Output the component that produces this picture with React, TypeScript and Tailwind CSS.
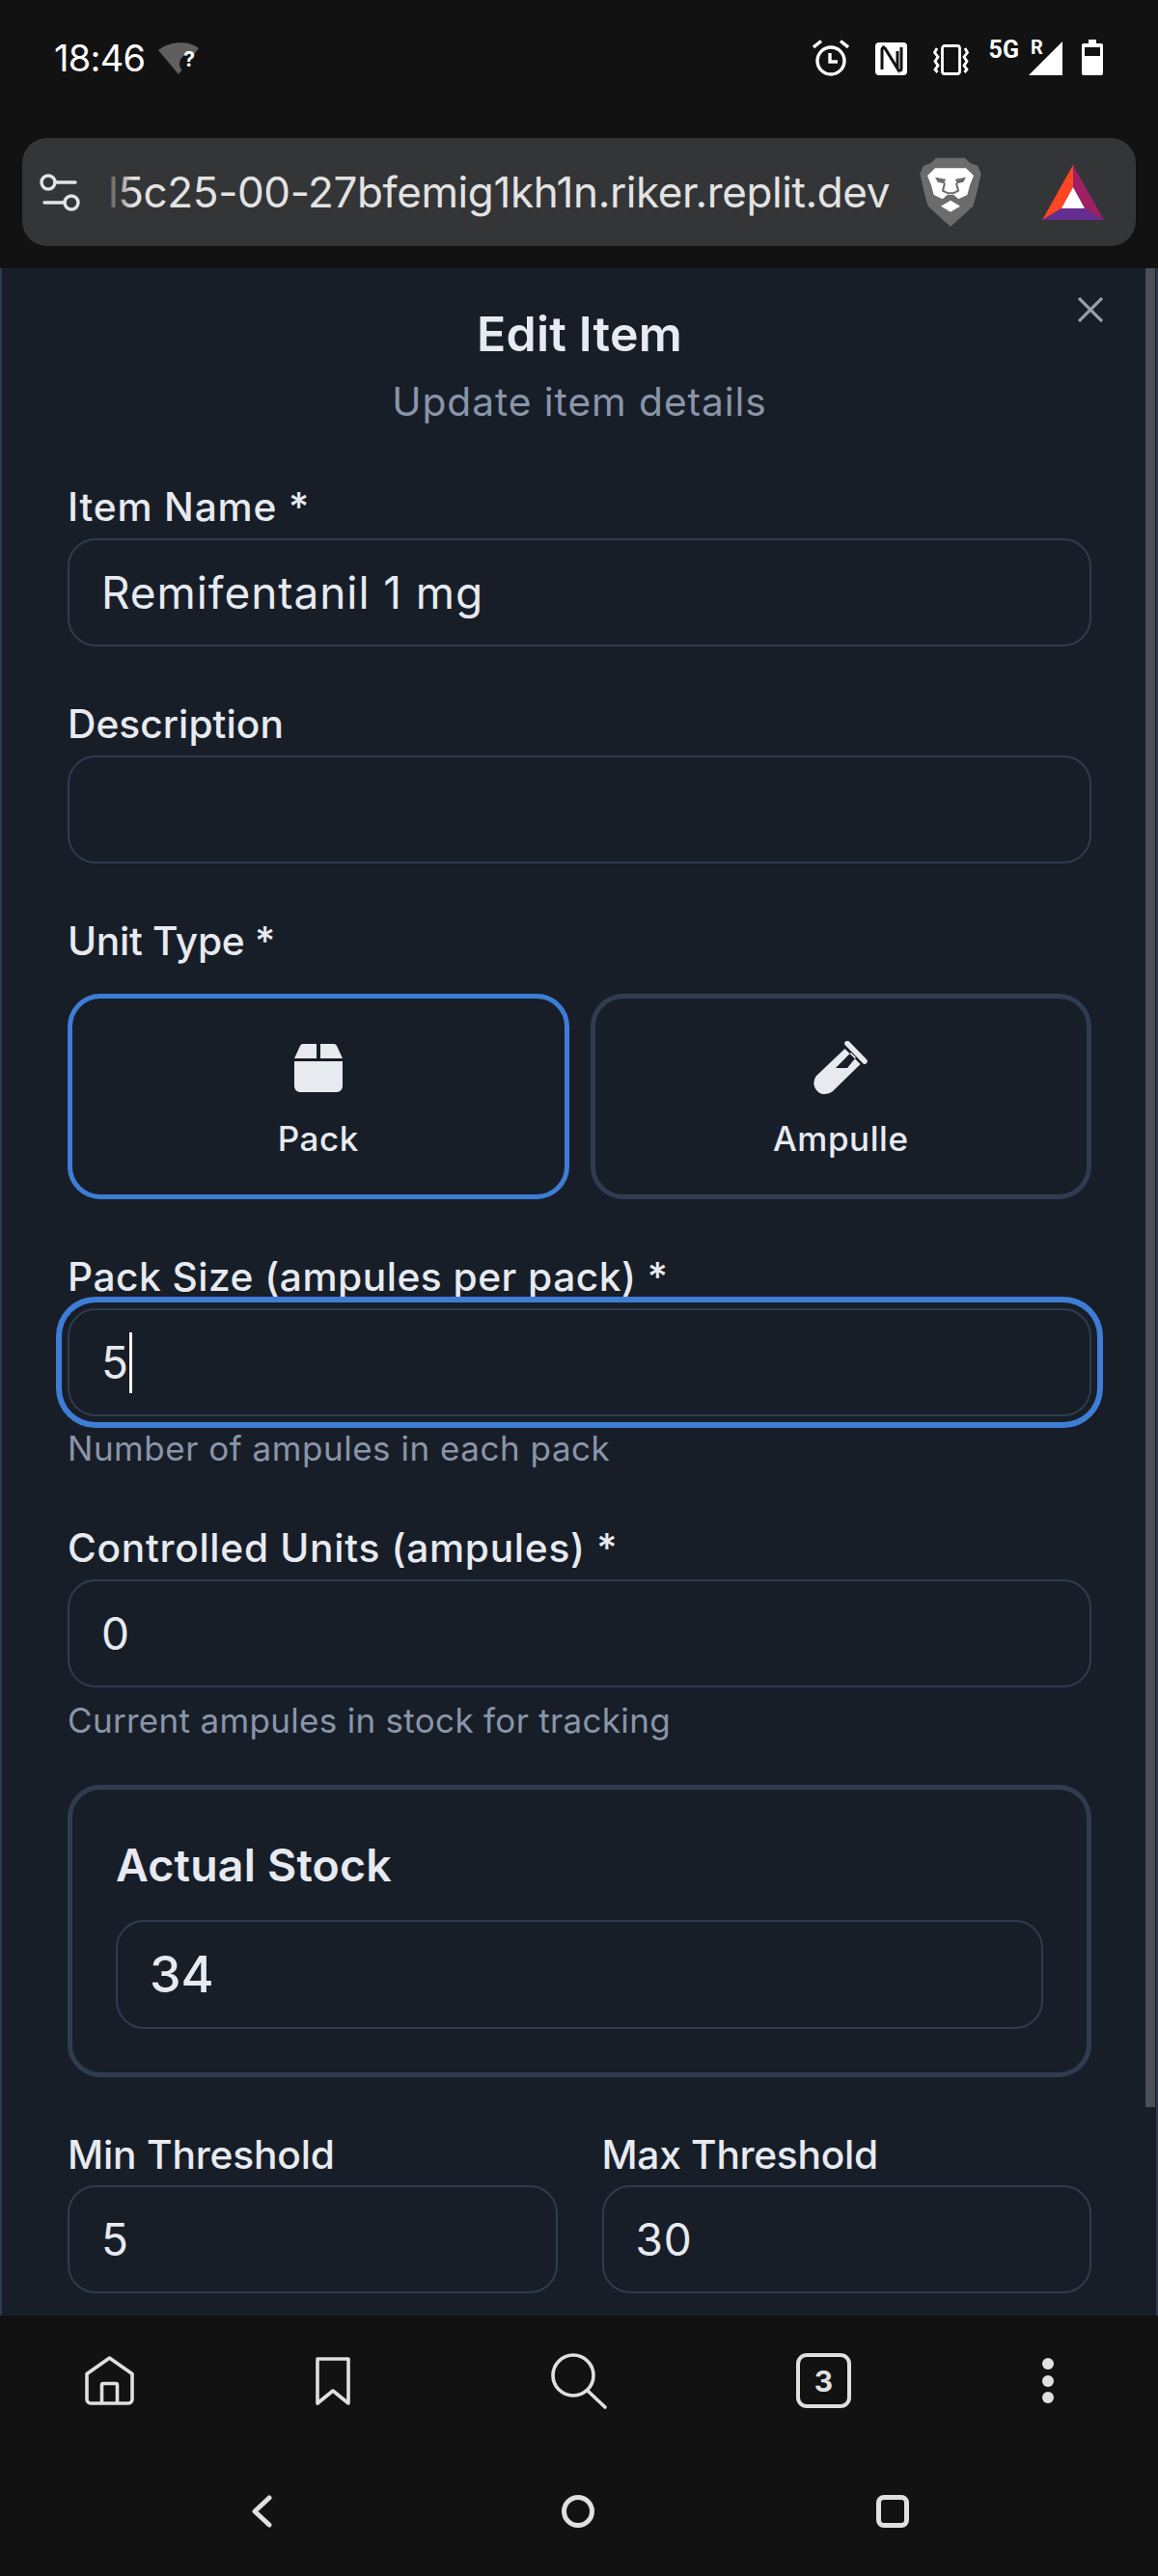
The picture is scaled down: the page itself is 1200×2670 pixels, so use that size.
const label = "block h-[48px] text-[40.7px] leading-[50px] font-medium text-[#e7eaf0] whitespace-nowrap";
const help = "h-[40px] text-[35px] leading-[40px] text-[#8a95a8] whitespace-nowrap";
const box = "rounded-[29px] border-2 border-[#2f3b50] bg-[#171e28] px-[33px] flex items-center text-[#e7eaf0]";
const field = `${box} h-[112px] text-[46px] tracking-[0.02em]`;

function StatusIcons() {
  return (
    <div className="flex items-start ml-auto mr-[57px] mt-[41px]">
      <svg width="38" height="38" viewBox="0 0 38 38" fill="none" stroke="#fff" strokeWidth="3.4">
        <circle cx="19" cy="22" r="14" />
        <path d="M18 14v9h8M1 8l8-6.500M37 8l-8-6.500" />
      </svg>
      <svg width="33" height="34" viewBox="0 0 33 34" className="ml-[27px] mt-[3px]">
        <rect width="33" height="34" rx="4" fill="#fff" />
        <path d="M7 28V7c0-1 1-2 3-1l13 21V9M7 5h3M23 29h3c1 0 1-1 1-2V5" fill="none" stroke="#121212" strokeWidth="3" />
      </svg>
      <svg width="37" height="32" viewBox="0 0 37 32" fill="none" stroke="#fff" strokeWidth="2.8" className="ml-[27px] mt-[5px]">
        <rect x="9.500" y="1.500" width="18" height="29" rx="2.500" />
        <path d="M4 4 1.500 8.500 5 13l-3 4.500L5 22l-3 4 2.500 3M33 4l2.500 4.500L32 13l3 4.500L32 22l3 4-2.500 3" />
      </svg>
      <span className="ml-[21px] h-[22px] text-[25px] leading-[22px] font-bold text-white font-['Roboto',sans-serif]">5G</span>
      <div className="relative ml-[10px] mt-[2px] w-[35px] h-[35px]">
        <svg width="35" height="35" viewBox="0 0 35 35">
          <path d="M35 0v35H0z" fill="#fff" />
        </svg>
        <span className="absolute left-[2px] -top-[3px] text-[20px] leading-[18px] font-bold text-white font-['Roboto',sans-serif]">R</span>
      </div>
      <svg width="22" height="37" viewBox="0 0 22 37" className="ml-[20px]">
        <path d="M7 0h8v4h5a2 2 0 0 1 2 2v29a2 2 0 0 1-2 2H2a2 2 0 0 1-2-2V6a2 2 0 0 1 2-2h5z" fill="#fff" />
        <rect x="3" y="8" width="16" height="9" fill="#121212" />
      </svg>
    </div>
  );
}

function BraveLion() {
  return (
    <svg width="64" height="72" viewBox="24 18 192 216" className="ml-[28px] shrink-0">
      <path d="M75 20H165L180 35 205 45 215 70 200 135 190 170 120 234 50 170 40 135 25 70 35 45 60 35Z" fill="#6c6c6c" />
      <path d="M48 75 72 52H168L192 75 180 105 172 135 145 148 130 135H110L95 148 68 135 60 105Z" fill="#fff" />
      <path d="M90 170 120 152 150 170 120 188Z" fill="#fff" />
      <path d="M72 80 105 86 100 100 80 95ZM168 80 135 86 140 100 160 95Z" fill="#6c6c6c" />
      <path d="M102 98 96 122 112 130H128L144 122 138 98" fill="none" stroke="#6c6c6c" strokeWidth="6" />
    </svg>
  );
}

function BatLogo() {
  return (
    <svg width="64" height="57" viewBox="0 0 64 57" className="ml-[63px] shrink-0">
      <path d="M32 0 0 57l20-12 12-22z" fill="#ff4724" />
      <path d="M32 0l32 57-20-12-12-22z" fill="#9e1f63" />
      <path d="M0 57h64L44 45H20z" fill="#662d91" />
      <path d="M32 23l12 22H20z" fill="#fff" />
    </svg>
  );
}

function UrlBar() {
  return (
    <div className="ml-[23px] w-[1154px] h-[112px] rounded-[26px] bg-[#343537] flex items-center">
      <svg width="42" height="39" viewBox="0 0 42 39" fill="none" stroke="#e3e3e3" strokeWidth="3.4" strokeLinecap="round" className="ml-[18px] shrink-0">
        <circle cx="9" cy="9" r="7" />
        <circle cx="33" cy="30" r="7" />
        <path d="M16 9h21M5 30h21" />
      </svg>
      <div className="relative ml-[29px] w-[813px] overflow-hidden">
        <div className="text-[44px] leading-[62px] text-[#e3e3e3] whitespace-nowrap tracking-[-0.009em]">l5c25-00-27bfemig1kh1n.riker.replit.dev</div>
        <div className="absolute left-0 top-0 w-[26px] h-full bg-linear-to-r from-[#343537]/80 to-transparent" />
      </div>
      <BraveLion />
      <BatLogo />
    </div>
  );
}

function PackIcon() {
  return (
    <svg width="50" height="50" viewBox="0 0 50 50" fill="#e7eaef">
      <path d="M0 15 6 2c.6-1.200 1.600-2 3-2h14v15zM50 15 44 2c-.6-1.200-1.600-2-3-2H27v15zM0 18h50v26a6 6 0 0 1-6 6H6a6 6 0 0 1-6-6z" />
    </svg>
  );
}

function TubeIcon() {
  return (
    <svg width="56" height="56" viewBox="0 0 56 56" fill="none">
      <path fillRule="evenodd" d="M32.500 8 48.600 24 20 52A11.700 11.700 0 0 1 3 36zM38.700 12l5.300 5-9 11H23z" fill="#e7eaef" />
      <path d="M35 2.500 53 21" stroke="#e7eaef" strokeWidth="5.500" strokeLinecap="round" />
    </svg>
  );
}

function UnitButton({ active, name, icon }: { active?: boolean; name: string; icon: React.ReactNode }) {
  return (
    <div className={`h-[213px] rounded-[34px] border-[5px] flex flex-col items-center ${active ? "border-[#3e7dd6]" : "border-[#2f3c50]"}`}>
      <div className="h-[56px] mt-[44px] flex items-center">{icon}</div>
      <div className="mt-[23px] text-[35px] leading-[44px] font-medium text-[#e7eaf0] tracking-[0.016em]">{name}</div>
    </div>
  );
}

function EditPanel() {
  return (
    <div className="relative h-[2122px] overflow-hidden border-x-2 border-[#2b3a50] bg-[#171e28] pl-[68px] pr-[67px]">
      <div className="absolute right-[1px] top-0 w-[10px] h-[1906px] bg-[#4a4e55]" />
      <svg width="26" height="26" viewBox="0 0 26 26" stroke="#9b9ea5" strokeWidth="3.200" className="absolute left-[1115px] top-[30px]">
        <path d="M1 1l24 24M25 1 1 25" />
      </svg>

      <div className="pt-[38px] text-center">
        <h2 className="text-[50px] leading-[60px] font-semibold text-[#e7eaf0] tracking-[0.004em]">Edit Item</h2>
        <p className="mt-[11px] text-[40.7px] leading-[60px] text-[#8a95a8] tracking-[0.023em]">Update item details</p>
      </div>

      <label className={`${label} mt-[54px] tracking-[0.02em]`}>Item Name *</label>
      <div className={`${field} mt-[9px]`}>Remifentanil 1 mg</div>

      <label className={`${label} mt-[56px] tracking-[0.001em]`}>Description</label>
      <div className={`${field} mt-[9px]`} />

      <label className={`${label} mt-[56px] -tracking-[0.007em]`}>Unit Type *</label>
      <div className="mt-[31px] grid grid-cols-2 gap-[22px]">
        <UnitButton active name="Pack" icon={<PackIcon />} />
        <UnitButton name="Ampulle" icon={<TubeIcon />} />
      </div>

      <label className={`${label} mt-[56px] tracking-[0.012em]`}>Pack Size (ampules per pack) *</label>
      <div className={`${field} relative mt-[9px] ring-[6px] ring-[#3e7dd6] ring-offset-[6px] ring-offset-[#171e28]`}>
        5<span className="w-[3px] h-[63px] bg-white" />
      </div>
      <div className={`${help} mt-[13px] tracking-[0.015em]`}>Number of ampules in each pack</div>

      <label className={`${label} mt-[59px] tracking-[0.017em]`}>Controlled Units (ampules) *</label>
      <div className={`${field} mt-[9px]`}>0</div>
      <div className={`${help} mt-[14px] tracking-[0.009em]`}>Current ampules in stock for tracking</div>

      <div className="mt-[47px] h-[303px] rounded-[34px] border-[5px] border-[#2f3c50] pt-[50px] px-[45px]">
        <h3 className="h-[56px] text-[46.500px] leading-[56px] font-semibold text-[#e7eaf0] tracking-[0.004em]">Actual Stock</h3>
        <div className={`${box} mt-[29px] h-[113px] text-[52px] font-medium`}>34</div>
      </div>

      <div className="mt-[56px] grid grid-cols-2 gap-[46px]">
        <div>
          <label className={`${label} -tracking-[0.004em]`}>Min Threshold</label>
          <div className={`${field} mt-[8px]`}>5</div>
        </div>
        <div>
          <label className={`${label} -tracking-[0.007em]`}>Max Threshold</label>
          <div className={`${field} mt-[8px]`}>30</div>
        </div>
      </div>
    </div>
  );
}

function BrowserBar() {
  return (
    <div className="h-[145px] flex items-start pt-[39px] text-[#e0e0e0]">
      <svg width="51" height="51" viewBox="0 0 51 51" fill="none" stroke="#e0e0e0" strokeWidth="3.600" strokeLinejoin="round" className="ml-[88px] mt-[3px]">
        <path d="M25.500 2 49 18.500V45a4 4 0 0 1-4 4H6a4 4 0 0 1-4-4V18.500z" />
        <path d="M17.500 49V30a1.500 1.500 0 0 1 1.500-1.500h13a1.500 1.500 0 0 1 1.500 1.500v19" />
      </svg>
      <svg width="36" height="50" viewBox="0 0 36 50" fill="none" stroke="#e0e0e0" strokeWidth="3.600" strokeLinejoin="round" className="ml-[188px] mt-[4px]">
        <path d="M2 2h32v46L18 35 2 48z" />
      </svg>
      <svg width="58" height="58" viewBox="0 0 58 58" fill="none" stroke="#e0e0e0" strokeWidth="3.600" strokeLinecap="round" className="ml-[208px]">
        <circle cx="23" cy="23" r="21" />
        <path d="M38 39l18 17" />
      </svg>
      <div className="ml-[196px] w-[57px] h-[57px] rounded-[11px] border-[4px] border-[#e0e0e0] flex items-center justify-center text-[30px] font-bold leading-none">3</div>
      <div className="ml-[198px] mt-[5px] flex flex-col gap-[5.500px]">
        <span className="w-[12px] h-[12px] rounded-full bg-[#e0e0e0]" />
        <span className="w-[12px] h-[12px] rounded-full bg-[#e0e0e0]" />
        <span className="w-[12px] h-[12px] rounded-full bg-[#e0e0e0]" />
      </div>
    </div>
  );
}

function NavBar() {
  return (
    <div className="flex items-start pt-[41px]">
      <svg width="22" height="34" viewBox="0 0 22 34" fill="none" stroke="#e0e0e0" strokeWidth="5" strokeLinecap="round" strokeLinejoin="round" className="ml-[260px]">
        <path d="M19 3 4 17l15 14" />
      </svg>
      <div className="ml-[300px] w-[34px] h-[34px] rounded-full border-[5px] border-[#e0e0e0]" />
      <div className="ml-[292px] w-[34px] h-[34px] rounded-[8px] border-[5px] border-[#e0e0e0]" />
    </div>
  );
}

export default function App() {
  return (
    <div className="w-[1200px] h-[2670px] overflow-hidden bg-[#121212] font-['Inter','Noto_Sans',sans-serif]">
      <div className="h-[143px] flex items-start">
        <span className="ml-[56px] mt-[38px] text-[38px] leading-[44px] text-white -tracking-[0.02em]">18:46</span>
        <svg width="44" height="34" viewBox="0 0 44 34" className="ml-[14px] mt-[44px]">
          <path d="M0 8C12-2 32-2 42 6L21 33z" fill="#5f5f5f" />
          <circle cx="32" cy="22" r="10" fill="#121212" />
        </svg>
        <span className="-ml-[18px] mt-[49px] text-[21px] leading-[26px] font-bold text-white">?</span>
        <StatusIcons />
      </div>
      <div className="h-[135px]">
        <UrlBar />
      </div>
      <EditPanel />
      <BrowserBar />
      <NavBar />
    </div>
  );
}
